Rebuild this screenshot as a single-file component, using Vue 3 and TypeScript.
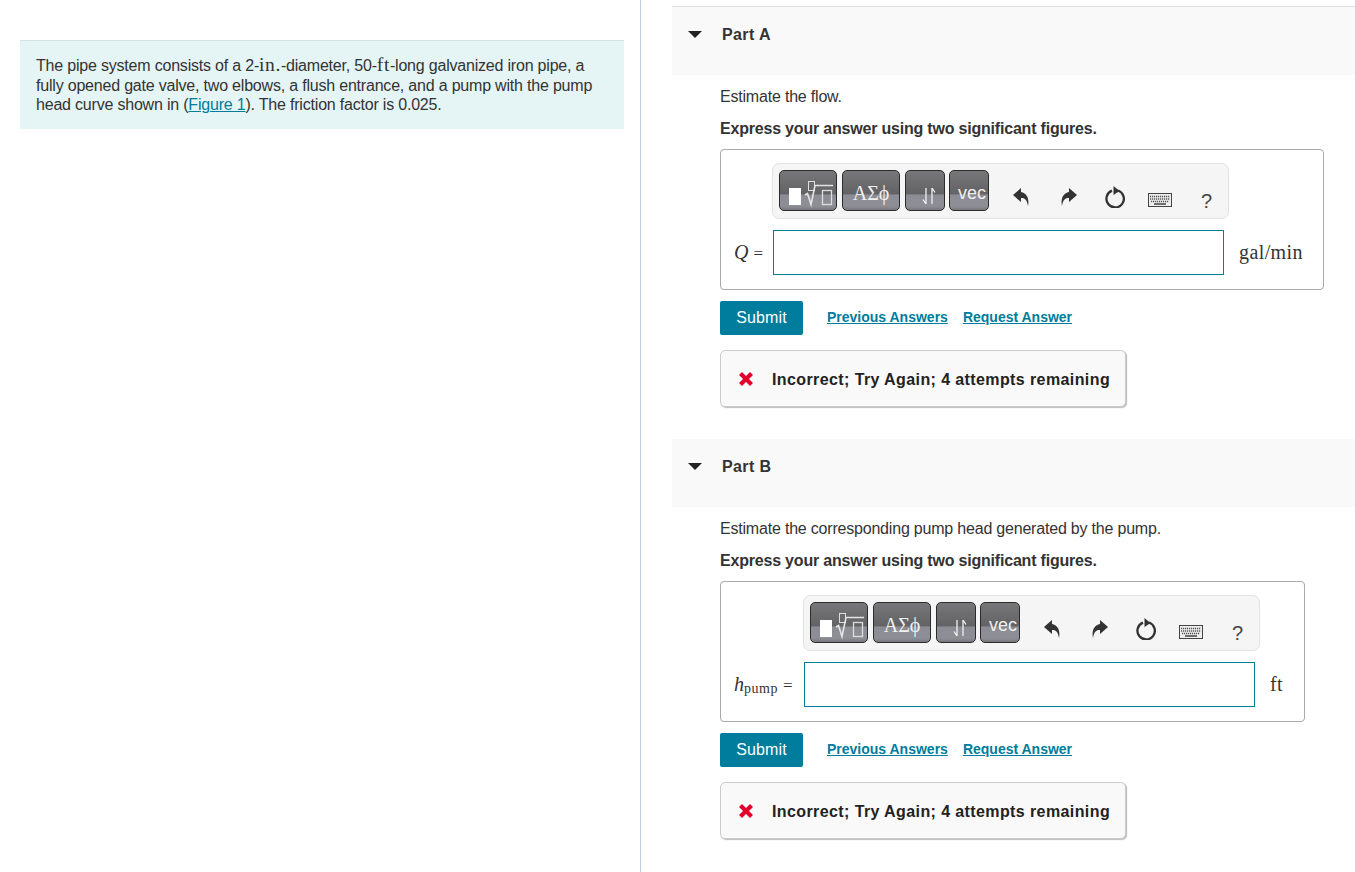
<script setup lang="ts">
interface Part {
	title: string;
	question: string;
	unit: string;
	symbol: string;
	sub?: string;
	labelWidth: number;
}

const parts: Part[] = [
	{
		title: "Part A",
		question: "Estimate the flow.",
		unit: "gal/min",
		symbol: "Q",
		labelWidth: 39,
	},
	{
		title: "Part B",
		question: "Estimate the corresponding pump head generated by the pump.",
		unit: "ft",
		symbol: "h",
		sub: "pump",
		labelWidth: 70,
	},
];
</script>

<template>
	<div class="page">
		<div class="left">
			<div class="intro">
				The pipe system consists of a 2-<span class="math">in.</span>-diameter, 50-<span class="math">ft</span>-long galvanized iron pipe, a
				fully opened gate valve, two elbows, a flush entrance, and a pump with the pump
				head curve shown in (<a href="#">Figure 1</a>). The friction factor is 0.025.
			</div>
		</div>

		<div class="right">
			<section v-for="part in parts" :key="part.title" class="part">
				<div class="part-head">
					<span class="caret"></span>
					<span class="part-title">{{ part.title }}</span>
				</div>

				<div class="part-body">
					<p class="question">{{ part.question }}</p>
					<p class="hint">Express your answer using two significant figures.</p>

					<div class="answer">
						<div class="toolbar">
							<button class="tool tool-wide">
								<svg width="56" height="39" viewBox="0 0 56 39">
									<rect x="9" y="17" width="12" height="17" fill="#fff" />
									<rect x="28.500" y="10.500" width="6" height="9" fill="none" stroke="#ddd" />
									<path d="M25 24l2.500-1.500 3.500 11 4-19h18" fill="none" stroke="#e4e4e4" stroke-width="1.600" />
									<rect x="42.500" y="19.500" width="9" height="14" fill="none" stroke="#ddd" stroke-width="1.300" />
								</svg>
							</button>
							<button class="tool tool-wide greek">ΑΣϕ</button>
							<button class="tool tool-small arrows">
								<svg width="16" height="18" viewBox="0 0 16 18">
									<path d="M5 1v16M5 17L2 12.500M11 17V1M11 1l3 4.500" fill="none" stroke="#f2f2f2" stroke-width="1.300" />
								</svg>
							</button>
							<button class="tool tool-small vec">vec</button>

							<svg class="action undo" width="16" height="20" viewBox="0 0 16 20">
								<path d="M8 1L0 8l8 7v-4c3-.5 6 1 7 8 1.500-7-1-13-7-14z" fill="#333" />
							</svg>
							<svg class="action redo" width="16" height="20" viewBox="0 0 16 20">
								<path d="M8 1l8 7-8 7v-4c-3-.5-6 1-7 8C-.5 12 2 6 8 5z" fill="#333" />
							</svg>
							<svg class="action reset" width="20" height="22" viewBox="0 0 20 22">
								<path d="M7 4.600A8.700 8.700 0 1 0 13 4.500" fill="none" stroke="#333" stroke-width="2.300" />
								<path d="M8.500 0l6 5-6 4z" fill="#333" />
							</svg>
							<svg class="action kbd" width="24" height="14" viewBox="0 0 24 14">
								<rect x="0.500" y="0.500" width="23" height="13" fill="#eee" stroke="#444" />
								<path d="M2 3.500h20M2 6h20M3 8.500h18" stroke="#555" stroke-width="1.300" stroke-dasharray="1.200 .8" />
								<path d="M6 11h12" stroke="#444" stroke-width="1.500" />
							</svg>
							<span class="help">?</span>
						</div>

						<div class="label" :style="{ width: part.labelWidth + 'px' }">
							<i>{{ part.symbol }}</i><sub v-if="part.sub">{{ part.sub }}</sub>
							<span class="equals">=</span>
						</div>
						<input class="field" type="text" />
						<div class="unit">{{ part.unit }}</div>
					</div>

					<div class="actions">
						<button class="submit">Submit</button>
						<a href="#" class="link">Previous Answers</a>
						<a href="#" class="link">Request Answer</a>
					</div>

					<div class="feedback">
						<svg width="16" height="16" viewBox="0 0 16 16">
							<path d="M2.500 2.500l11 11M13.500 2.500l-11 11" stroke="#e2002a" stroke-width="4.200" />
						</svg>
						<span class="feedback-text">Incorrect; Try Again; 4 attempts remaining</span>
					</div>
				</div>
			</section>
		</div>
	</div>
</template>

<style scoped>
.page {
	display: flex;
	height: 872px;
	overflow: hidden;
	font-family: "Liberation Sans", Arial, sans-serif;
	color: #333;
}

.left {
	width: 641px;
	flex: none;
	box-sizing: border-box;
	padding: 40px 16px 0 20px;
	border-right: 1px solid #bcd0e2;
}

.intro {
	box-sizing: border-box;
	height: 89px;
	border-top: 1px solid #d5e2e2;
	background: #e5f5f5;
	padding: 15px 16px;
	font-size: 16px;
	line-height: 19.500px;
	letter-spacing: -0.200px;
}

.intro a {
	color: #007c9c;
}

.math {
	font-family: "Liberation Serif", serif;
	font-size: 19.500px;
	line-height: 0;
	letter-spacing: 0.600px;
}

.right {
	flex: 1;
	min-width: 0;
	padding: 6px 0 0 31px;
}

.part {
	height: 432px;
}

.part-head {
	height: 69px;
	box-sizing: border-box;
	border-top: 1px solid #e0e0e0;
	background: #f9f9f9;
	display: flex;
	align-items: flex-start;
	padding: 18px 0 0 16px;
}

.part + .part .part-head {
	border-top-color: #fff;
}

.caret {
	width: 0;
	height: 0;
	border-left: 7px solid transparent;
	border-right: 7px solid transparent;
	border-top: 7px solid #222;
	margin-top: 6px;
	margin-right: 20px;
}

.part-title {
	font-size: 16px;
	font-weight: 700;
	letter-spacing: 0.400px;
	line-height: 20px;
}

.part-body {
	padding-left: 48px;
}

.question {
	margin: 12px 0 0;
	font-size: 16px;
	line-height: 20px;
	letter-spacing: -0.200px;
}

.hint {
	margin: 12px 0 0;
	font-size: 16px;
	line-height: 20px;
	font-weight: 700;
	letter-spacing: -0.200px;
}

.answer {
	display: inline-grid;
	grid-template-columns: auto 451px auto;
	grid-template-rows: auto auto;
	align-items: center;
	margin-top: 10px;
	vertical-align: top;
	border: 1px solid #aaa;
	border-radius: 4px;
	padding: 13px 20px 14px 13px;
	height: 141px;
	box-sizing: border-box;
}

.toolbar {
	grid-column: 2;
	grid-row: 1;
	width: 457px;
	height: 56px;
	box-sizing: border-box;
	margin-left: -1px;
	display: flex;
	align-items: flex-start;
	gap: 5px;
	padding: 6px 0 0 6px;
	background: #f5f5f5;
	border: 1px solid #e2e2e2;
	border-radius: 7px;
}

.tool {
	height: 41px;
	padding: 0;
	box-sizing: border-box;
	border: 1px solid #2c2c2c;
	border-radius: 5px;
	background: linear-gradient(#777779 0, #636366 58%, #8c8c94 62%, #8e8e96 90%, #77777e 100%);
	color: #f0f0f0;
	display: flex;
	align-items: center;
	justify-content: center;
	overflow: hidden;
}

.tool-wide {
	width: 58px;
}

.tool-small {
	width: 40px;
}

.tool-small + .tool-small {
	margin-left: -1px;
}

.greek {
	font-family: "Liberation Serif", serif;
	font-size: 20px;
	padding-top: 5px;
}

.arrows {
	padding: 11px 0 0 8px;
}

.vec {
	font-family: "Liberation Sans", sans-serif;
	font-size: 18px;
	padding: 6px 0 0 6px;
}

.action {
	flex: none;
}

.undo {
	margin: 17px 0 0 19px;
}

.redo {
	margin: 17px 0 0 27px;
}

.reset {
	margin: 16px 0 0 23px;
}

.kbd {
	margin: 23px 0 0 18px;
}

.help {
	margin: 20px 0 0 24px;
	font-size: 20px;
	line-height: 22px;
	color: #444;
}

.label {
	grid-column: 1;
	grid-row: 2;
	box-sizing: border-box;
	margin-top: 11px;
	font-family: "Liberation Serif", serif;
	font-size: 20px;
	white-space: nowrap;
}

.label sub {
	font-size: 14px;
	vertical-align: -2px;
	line-height: 0;
	letter-spacing: 0.500px;
}

.equals {
	margin-left: 5px;
	font-size: 17px;
}

.field {
	grid-column: 2;
	grid-row: 2;
	width: 451px;
	height: 45px;
	box-sizing: border-box;
	border: 1px solid #007c9c;
	background: #fff;
	margin: 11px 0 0;
	padding: 0;
	outline: none;
}

.unit {
	grid-column: 3;
	grid-row: 2;
	box-sizing: border-box;
	min-width: 29px;
	padding-left: 15px;
	margin-top: 11px;
	font-family: "Liberation Serif", serif;
	font-size: 20px;
	letter-spacing: 0.400px;
}

.actions {
	display: flex;
	align-items: center;
	margin-top: 11px;
}

.submit {
	width: 83px;
	height: 34px;
	padding: 0;
	background: #007c9c;
	color: #fff;
	border: none;
	border-radius: 2px;
	font-family: "Liberation Sans", sans-serif;
	font-size: 16px;
	letter-spacing: 0.100px;
	margin-right: 24px;
}

.link {
	color: #007c9c;
	font-size: 14px;
	font-weight: 700;
	margin: -3px 15px 0 0;
}

.feedback {
	display: inline-flex;
	align-items: center;
	gap: 18px;
	margin-top: 15px;
	height: 57px;
	width: 406px;
	box-sizing: border-box;
	padding-left: 17px;
	background: #f9f9f9;
	border: 1px solid #ccc;
	border-radius: 5px;
	box-shadow: 1px 1px 1px #bbb;
	font-size: 16px;
	font-weight: 700;
	letter-spacing: 0.400px;
	color: #222;
	white-space: nowrap;
}

.feedback-text {
	padding-top: 2px;
}
</style>
